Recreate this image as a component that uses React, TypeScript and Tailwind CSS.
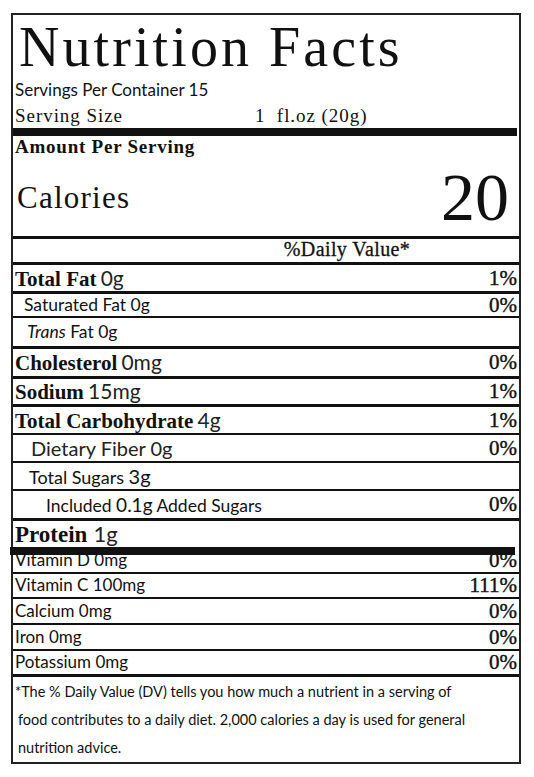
import React from 'react';

// nutrition label, rows listed top to bottom
const serif = "font-['Liberation_Serif',serif]";
const sans = "font-['Lato',sans-serif]";

type Row = {
    label: React.ReactNode;
    dv?: string;
    h: string;
    border: string;
};

const rows: Row[] = [
    {
        label: <><span className={`${serif} font-bold text-[21px]`}>Total Fat</span> <span className={`${sans} text-[21px] text-[#222]`}>0g</span></>,
        dv: '1%', h: 'h-[29px]', border: 'border-b-[3px]',
    },
    {
        label: <span className={`${sans} text-[17.5px] pl-[9px]`}>Saturated Fat 0g</span>,
        dv: '0%', h: 'h-[24px]', border: 'border-b-2',
    },
    {
        label: <span className={`${sans} text-[17.5px] pl-[12px]`}><i>Trans</i> Fat 0g</span>,
        h: 'h-[31px]', border: 'border-b-[3px]',
    },
    {
        label: <><span className={`${serif} font-bold text-[21px]`}>Cholesterol</span> <span className={`${sans} text-[21px] text-[#222]`}>0mg</span></>,
        dv: '0%', h: 'h-[30px]', border: 'border-b-[3px]',
    },
    {
        label: <><span className={`${serif} font-bold text-[21px]`}>Sodium</span> <span className={`${sans} text-[21px] text-[#222]`}>15mg</span></>,
        dv: '1%', h: 'h-[28px]', border: 'border-b-[3px]',
    },
    {
        label: <><span className={`${serif} font-bold text-[21px]`}>Total Carbohydrate</span> <span className={`${sans} text-[21px] text-[#222]`}>4g</span></>,
        dv: '1%', h: 'h-[28px]', border: 'border-b-2',
    },
    {
        label: <span className={`${sans} text-[20px] pl-[16px] text-[#222]`}>Dietary Fiber 0g</span>,
        dv: '0%', h: 'h-[28px]', border: 'border-b-2',
    },
    {
        label: <span className={`${sans} text-[18px] pl-[14px]`}>Total Sugars <span className="text-[20px]">3g</span></span>,
        h: 'h-[28px]', border: 'border-b-2',
    },
    {
        label: <span className={`${sans} text-[17.5px] pl-[31px]`}>Included <span className="text-[19px]">0.1g</span> Added Sugars</span>,
        dv: '0%', h: 'h-[30px]', border: 'border-b-[3px]',
    },
];

const minerals: { label: string; dv: string; h: string; border: string }[] = [
    { label: 'Vitamin D 0mg', dv: '0%', h: 'h-[27px]', border: 'border-b-2' },
    { label: 'Vitamin C 100mg', dv: '111%', h: 'h-[25px]', border: 'border-b-2' },
    { label: 'Calcium 0mg', dv: '0%', h: 'h-[26px]', border: 'border-b-2' },
    { label: 'Iron 0mg', dv: '0%', h: 'h-[26px]', border: 'border-b-2' },
    { label: 'Potassium 0mg', dv: '0%', h: 'h-[26px]', border: 'border-b-[3px]' },
];

function Percent({ value }: { value?: string }) {
    if (!value) return null;
    return <span className={`${serif} text-[21px] leading-none pr-[2px] [-webkit-text-stroke:0.4px_#111]`}>{value}</span>;
}

export default function App() {
    return (
        <div className="min-h-[777px] w-[534px] bg-white text-[#111] pt-[13px] pl-[11px]">
            <div className="w-[510px] border-2 border-[#222]">
                {/* header */}
                <div className="pl-[2px]">
                    <h1 className={`${serif} text-[56px] leading-[63px] tracking-[0.055em] pl-[4px] pt-[1px]`}>Nutrition Facts</h1>
                    <p className={`${sans} text-[17px] leading-[22px]`}>Servings Per Container 15</p>
                    <div className={`${serif} text-[19px] h-[27px] leading-none tracking-[0.05em] flex items-end pb-[3px]`}>
                        <span className="w-[240px]">Serving Size</span>
                        <span>1&nbsp; fl.oz (20g)</span>
                    </div>
                </div>
                <div className="h-2 bg-[#111] mr-[2px]" />
                <div className="h-[103px] border-b-[3px] border-[#111] pl-[2px] pr-[10px] flex flex-col">
                    <p className={`${serif} font-bold text-[19px] leading-[22px] tracking-[0.04em]`}>Amount Per Serving</p>
                    <div className="flex justify-between items-end flex-1">
                        <span className={`${serif} text-[31px] leading-none tracking-[0.04em] mb-[23px] pl-[2px]`}>Calories</span>
                        <span className={`${serif} text-[68px] leading-none mb-[5px]`}>20</span>
                    </div>
                </div>
                <div className="h-[26px] border-b-[3px] border-[#111] flex items-end justify-center pl-[162px]">
                    <span className={`${serif} text-[20px] leading-none mb-[3px] tracking-[0.02em] [-webkit-text-stroke:0.3px_#111]`}>%Daily Value*</span>
                </div>

                {/* nutrients */}
                {rows.map((row, i) => (
                    <div key={i} className={`${row.h} ${row.border} border-[#111] flex items-center justify-between pl-[2px] leading-none`}>
                        <span>{row.label}</span>
                        <Percent value={row.dv} />
                    </div>
                ))}

                <div className="h-[26px] flex items-center pl-[2px]">
                    <span className={`${serif} font-bold text-[23px] leading-none`}>Protein</span>
                    <span className={`${sans} text-[22px] leading-none ml-[6px] text-[#222]`}>1g</span>
                </div>
                <div className="relative z-10 h-2 -mb-2 bg-[#111] -ml-[3px] w-[505px]" />

                {/* vitamins & minerals */}
                {minerals.map((m) => (
                    <div key={m.label} className={`${m.h} ${m.border} border-[#111] flex items-end justify-between pl-[2px] pb-[1px]`}>
                        <span className={`${sans} text-[17px] leading-none mb-[3px]`}>{m.label}</span>
                        <Percent value={m.dv} />
                    </div>
                ))}

                {/* footnote */}
                <div className={`${sans} text-[14.5px] leading-[28px] pl-[2px] pt-[1px] h-[85px]`}>
                    <p>*The % Daily Value (DV) tells you how much a nutrient in a serving of</p>
                    <p className="pl-[3px]">food contributes to a daily diet. 2,000 calories a day is used for general</p>
                    <p className="pl-[3px]">nutrition advice.</p>
                </div>
            </div>
        </div>
    );
}
